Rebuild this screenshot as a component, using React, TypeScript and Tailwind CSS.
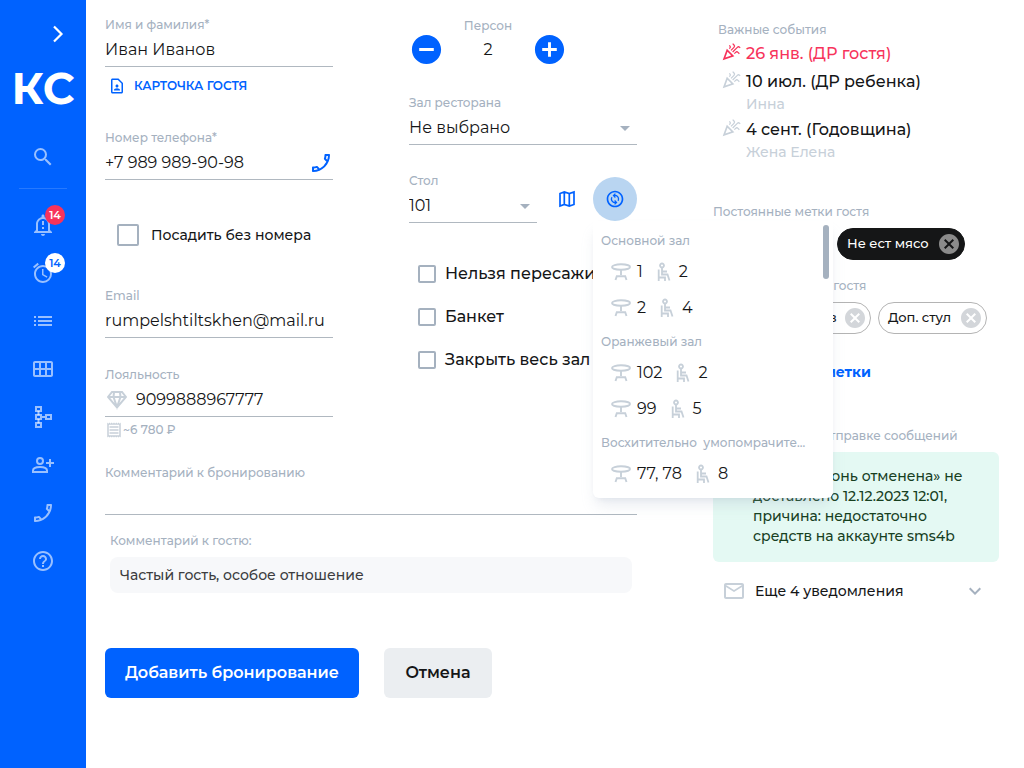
import { useState } from 'react';
import type { ReactNode } from 'react';
import clsx from 'clsx';
import {
  MdAccessAlarm,
  MdAddCircle,
  MdArrowDropDown,
  MdCancel,
  MdHelpOutline,
  MdKeyboardArrowDown,
  MdList,
  MdMailOutline,
  MdOutlineCalendarViewMonth,
  MdOutlineCall,
  MdOutlineCelebration,
  MdOutlineChangeCircle,
  MdOutlineContactPage,
  MdOutlineNotificationImportant,
  MdOutlineReceipt,
  MdRemoveCircle,
  MdSearch,
} from 'react-icons/md';

interface IconProps {
  className?: string;
}

function ExpandIcon({ className }: IconProps) {
  return (
    <svg viewBox="0 0 24 24" fill="none" stroke="currentColor" strokeWidth="2.200" className={className}>
      <path d="M8 4.500l7.500 7.500L8 19.500" />
    </svg>
  );
}

function SchemeIcon({ className }: IconProps) {
  return (
    <svg viewBox="0 0 24 24" fill="none" stroke="currentColor" strokeWidth="2" className={className}>
      <path d="M5 2h5v4H5zM5 10h5v4H5zM5 18h5v4H5zM15 10h5v4h-5zM10 12h5" />
      <path d="M7.500 6v4M7.500 14v4" />
    </svg>
  );
}

function PersonAddIcon({ className }: IconProps) {
  return (
    <svg viewBox="0 0 24 24" fill="none" stroke="currentColor" strokeWidth="2" className={className}>
      <circle cx="9" cy="8" r="3" />
      <path d="M2 19v-1.500C2 15 6 14 9 14s7 1 7 3.500V19zM15 10h8M19 6v8" />
    </svg>
  );
}

function MapIcon({ className }: IconProps) {
  return (
    <svg viewBox="0 0 18 18" fill="none" stroke="currentColor" strokeWidth="1.700" className={className}>
      <path d="M2 3.500 6.300 2l5 1.500L16 2v12.500L11.300 16l-5-1.500L2 16zM6.300 2v12.500M11.300 3.500V16" />
    </svg>
  );
}

function GemIcon({ className }: IconProps) {
  return (
    <svg viewBox="0 0 20 20" fill="none" stroke="currentColor" strokeWidth="2" className={className}>
      <path d="M5 2h10l4 5-9 10.500L1 7zM1 7h18M7 2.500 6.500 7l3.500 10L13.500 7 13 2.500" />
    </svg>
  );
}

function TableIcon({ className }: IconProps) {
  return (
    <svg viewBox="0 0 20 18" fill="none" stroke="currentColor" strokeWidth="1.900" className={className}>
      <ellipse cx="10" cy="4" rx="9" ry="2.700" />
      <path d="M10 7v5M4.500 17l1.300-3.800h8.400L15.500 17" />
    </svg>
  );
}

function SeatIcon({ className }: IconProps) {
  return (
    <svg viewBox="0 0 14 20" fill="none" stroke="currentColor" strokeWidth="1.800" className={className}>
      <circle cx="5" cy="3.500" r="2" />
      <path d="M5 6v6.500h5.500l2 6M5.500 9.500H10M1.700 7.500V19M1.700 15.500h6.300V19" />
    </svg>
  );
}

const navItems = [
  { label: 'Уведомления', icon: MdOutlineNotificationImportant, badge: '14', badgeStyle: 'bg-[#f7335b] text-white' },
  { label: 'Напоминания', icon: MdAccessAlarm, badge: '14', badgeStyle: 'bg-white text-[#0062ff]' },
  { label: 'Список', icon: MdList },
  { label: 'Календарь', icon: MdOutlineCalendarViewMonth },
  { label: 'Схема', icon: SchemeIcon },
  { label: 'Добавить гостя', icon: PersonAddIcon },
  { label: 'Звонки', icon: MdOutlineCall, flip: true },
  { label: 'Помощь', icon: MdHelpOutline },
];

const halls = [
  { name: 'Основной зал', tables: [{ table: '1', seats: 2 }, { table: '2', seats: 4 }] },
  { name: 'Оранжевый зал', tables: [{ table: '102', seats: 2 }, { table: '99', seats: 5 }] },
  { name: 'Восхитительно\u00a0 умопомрачите...', tables: [{ table: '77, 78', seats: 8 }] },
];

const events = [
  { title: '26 янв. (ДР гостя)', urgent: true },
  { title: '10 июл. (ДР ребенка)', person: 'Инна' },
  { title: '4 сент. (Годовщина)', person: 'Жена Елена' },
];

function Sidebar() {
  return (
    <aside className="flex w-[86px] shrink-0 flex-col items-center bg-[#0062ff]">
      <button aria-label="Развернуть" className="mt-[22px] mr-4 self-end text-white">
        <ExpandIcon className="size-6" />
      </button>
      <div className="mt-[18px] text-[44px] leading-12 font-bold text-white">КС</div>
      <button aria-label="Поиск" className="mt-[33px] text-white/60">
        <MdSearch className="size-6" />
      </button>
      <nav className="mt-[19px] flex w-12 flex-col items-center border-t border-white/15">
        {navItems.map(({ label, icon: Icon, badge, badgeStyle, flip }) => (
          <a
            key={label}
            href="#"
            aria-label={label}
            className="relative flex size-12 items-center justify-center text-white/60 first:mt-3"
          >
            <Icon className={clsx('size-6', flip && '-scale-x-100')} />
            {badge && (
              <span
                className={clsx(
                  'absolute top-1 right-0.5 flex size-5 items-center justify-center rounded-full text-[11px] font-semibold',
                  badgeStyle,
                )}
              >
                {badge}
              </span>
            )}
          </a>
        ))}
      </nav>
    </aside>
  );
}

interface FieldProps {
  id: string;
  label: string;
  className?: string;
  children: ReactNode;
}

function Field({ id, label, className, children }: FieldProps) {
  return (
    <div className={clsx('border-b border-[#b0b8c0]', className)}>
      <label htmlFor={id} className="block text-xs font-medium text-[#a5b1bf]">
        {label}
      </label>
      <div className="relative flex h-[33px] items-center">{children}</div>
    </div>
  );
}

function SelectBox({ id, options }: { id: string; options: string[] }) {
  return (
    <>
      <select id={id} className="w-full appearance-none bg-transparent text-base outline-none">
        {options.map((option) => (
          <option key={option}>{option}</option>
        ))}
      </select>
      <MdArrowDropDown className="pointer-events-none absolute right-0 size-6 text-[#a5b1bf]" />
    </>
  );
}

const inputStyle = 'w-full min-w-0 bg-transparent text-base outline-none';

function Check({ label, large }: { label: string; large?: boolean }) {
  return (
    <label
      className={clsx(
        'flex h-6 items-center font-medium whitespace-nowrap',
        large ? 'gap-3 text-sm' : 'gap-[9px] text-base',
      )}
    >
      <input
        type="checkbox"
        className={clsx(
          'shrink-0 appearance-none rounded-xs border-2 border-[#a5b1bf] checked:bg-[#0062ff]',
          large ? 'size-[22px]' : 'size-[18px]',
        )}
      />
      {label}
    </label>
  );
}

function TableMenu() {
  return (
    <div className="absolute top-full left-0 z-10 w-60 rounded-b-md bg-white pt-1 pb-1.5 shadow-lg shadow-slate-400/20">
      {halls.map((hall) => (
        <section key={hall.name}>
          <h3 className="h-[29px] pt-2 pl-2 text-xs font-medium whitespace-nowrap text-[#a5b1bf]">{hall.name}</h3>
          {hall.tables.map(({ table, seats }) => (
            <button type="button" key={table} className="flex h-9 w-full items-center pl-[18px] text-base">
              <TableIcon className="mr-1.5 h-[18px] w-5 text-[#c7d0d9]" />
              {table}
              <SeatIcon className="mr-2 ml-3.5 h-5 w-3.5 text-[#c7d0d9]" />
              {seats}
            </button>
          ))}
        </section>
      ))}
      <span className="absolute top-1 right-1 h-[54px] w-1.5 rounded-full bg-[#a5b1bf]" />
    </div>
  );
}

function Chip({ label, dark, className }: { label: string; dark?: boolean; className?: string }) {
  return (
    <span
      className={clsx(
        'flex h-8 items-center justify-between rounded-full border pr-[3px] pl-[9px] text-[13px] font-medium whitespace-nowrap',
        dark ? 'border-[#151617] bg-[#151617] text-white' : 'border-[#b4b4b4] text-[#151617]',
        className,
      )}
    >
      {label}
      <button aria-label={`Удалить: ${label}`} className={dark ? 'text-[#8b8b8b]' : 'text-[#d3d6da]'}>
        <MdCancel className="size-6" />
      </button>
    </span>
  );
}

function GuestPanel() {
  return (
    <section className="min-w-0 flex-[286]">
      <div className="pt-[5px] pl-[5px]">
        <h2 className="text-xs font-medium text-[#a5b1bf]">Важные события</h2>
        <ul className="mt-1 space-y-1 font-medium">
          {events.map(({ title, person, urgent }) => (
            <li
              key={title}
              className={clsx('flex items-start gap-[5px] pl-[3px]', urgent ? 'text-[#f7335b]' : 'text-[#151617]')}
            >
              <MdOutlineCelebration className={clsx('size-5', !urgent && 'text-[#c7d0d9]')} />
              <div>
                {title}
                {person && <div className="text-sm text-[#c7d0d9]">{person}</div>}
              </div>
            </li>
          ))}
        </ul>
      </div>

      <h2 className="mt-[42px] text-xs font-medium text-[#a5b1bf]">Постоянные метки гостя</h2>
      <div className="mt-2 flex gap-2">
        <Chip label="Аллергия" dark className="w-[116px]" />
        <Chip label="Не ест мясо" dark className="w-32" />
      </div>

      <h2 className="mt-[18px] text-xs font-medium text-[#a5b1bf]">Временные метки гостя</h2>
      <div className="mt-2 flex gap-[7px]">
        <Chip label="Много подарков" className="w-[158px]" />
        <Chip label="Доп. стул" className="w-[109px]" />
      </div>

      <button className="mt-[26px] block w-[158px] text-right text-sm leading-6 font-bold text-[#0062ff]">
        Изменить метки
      </button>

      <h2 className="mt-11 text-xs font-medium text-[#a5b1bf]">Уведомления об отправке сообщений</h2>
      <p className="mt-2 rounded-md bg-[#e4f9f3] pt-3.5 pr-5 pb-4 pl-10 text-sm font-medium text-[#17401f]">
        Статус «Бронь отменена» не доставлено 12.12.2023 12:01, причина: недостаточно средств на аккаунте sms4b
      </p>
      <button className="mt-[17px] flex h-6 w-full items-center pr-3 pl-[9px] text-sm font-medium">
        <MdMailOutline className="size-6 text-[#c7d0d9]" />
        <span className="ml-[9px]">Еще 4 уведомления</span>
        <MdKeyboardArrowDown className="ml-auto size-6 text-[#a5b1bf]" />
      </button>
    </section>
  );
}

export default function App() {
  const [persons, setPersons] = useState(2);

  return (
    <div className="flex min-h-screen bg-white font-[Montserrat,Inter,sans-serif] text-[#151617]">
      <Sidebar />
      <main className="flex min-w-0 flex-1 gap-[76px] pt-[17px] pr-[25px] pl-[19px]">
        <form className="min-w-0 flex-[532]" onSubmit={(e) => e.preventDefault()}>
          <div className="grid grid-cols-2 gap-x-[76px]">
            <div>
              <Field id="name" label="Имя и фамилия*">
                <input id="name" className={inputStyle} defaultValue="Иван Иванов" />
              </Field>
              <button
                type="button"
                className="mt-[7px] flex h-6 items-center gap-2 pl-[3px] text-xs font-semibold text-[#0062ff]"
              >
                <MdOutlineContactPage className="size-[18px]" />
                КАРТОЧКА ГОСТЯ
              </button>
              <Field id="phone" label="Номер телефона*" className="mt-8">
                <input id="phone" className={inputStyle} defaultValue="+7 989 989-90-98" />
                <MdOutlineCall className="size-6 shrink-0 -scale-x-100 text-[#0062ff]" />
              </Field>
              <div className="mt-[43px] pl-3">
                <Check label="Посадить без номера" large />
              </div>
              <Field id="email" label="Email" className="mt-[41px]">
                <input id="email" className={inputStyle} defaultValue="rumpelshtiltskhen@mail.ru" />
              </Field>
              <Field id="loyalty" label="Лояльность" className="mt-[29px]">
                <GemIcon className="mr-[9px] ml-0.5 size-5 shrink-0 text-[#c7d0d9]" />
                <input id="loyalty" className={inputStyle} defaultValue="9099888967777" />
              </Field>
              <div className="mt-1 flex h-[18px] items-center text-xs font-medium text-[#a5b1bf]">
                <MdOutlineReceipt className="size-[18px] text-[#c7d0d9]" />
                ~6 780 ₽
              </div>
            </div>

            <div>
              <div className="flex w-[158px] items-center justify-between text-[#0062ff]">
                <button
                  type="button"
                  aria-label="Меньше"
                  className="mt-[15px]"
                  onClick={() => setPersons(Math.max(1, persons - 1))}
                >
                  <MdRemoveCircle className="size-[35px]" />
                </button>
                <div className="text-center">
                  <div className="text-xs font-medium text-[#a5b1bf]">Персон</div>
                  <output className="flex h-[33px] items-center justify-center text-base text-[#151617]">
                    {persons}
                  </output>
                </div>
                <button
                  type="button"
                  aria-label="Больше"
                  className="mt-[15px]"
                  onClick={() => setPersons(persons + 1)}
                >
                  <MdAddCircle className="size-[35px]" />
                </button>
              </div>
              <Field id="hall" label="Зал ресторана" className="mt-7">
                <SelectBox id="hall" options={['Не выбрано', 'Основной зал', 'Оранжевый зал']} />
              </Field>
              <div className="mt-7 flex items-start">
                <Field id="table" label="Стол" className="min-w-0 flex-1">
                  <SelectBox id="table" options={['101', '102', '99']} />
                </Field>
                <button type="button" aria-label="Карта зала" className="mt-[17px] ml-[21px] text-[#0062ff]">
                  <MapIcon className="size-[18px]" />
                </button>
                <div className="relative mt-1 ml-[17px]">
                  <button
                    type="button"
                    aria-label="Сменить стол"
                    className="flex size-11 items-center justify-center rounded-full bg-[#b9d5f1] text-[#0062ff]"
                  >
                    <MdOutlineChangeCircle className="size-5" />
                  </button>
                  <TableMenu />
                </div>
              </div>
              <div className="mt-[39px] space-y-[19px] pl-[9px]">
                <Check label="Нельзя пересаживать" />
                <Check label="Банкет" />
                <Check label="Закрыть весь зал" />
              </div>
            </div>
          </div>

          <Field id="comment" label="Комментарий к бронированию" className="mt-[26px]">
            <input id="comment" className={inputStyle} />
          </Field>
          <div className="mt-[18px] px-[5px]">
            <div className="text-xs font-medium text-[#a5b1bf]">Комментарий к гостю:</div>
            <p className="mt-2 rounded-lg bg-[#f7f8fa] px-2.5 py-2 text-sm font-medium text-[#3c3d3f]">
              Частый гость, особое отношение
            </p>
          </div>
          <div className="mt-[55px] flex gap-[25px] text-base font-semibold">
            <button type="submit" className="h-[50px] w-[254px] rounded-md bg-[#0062ff] text-white">
              Добавить бронирование
            </button>
            <button type="button" className="h-[50px] w-[108px] rounded-md bg-[#ebeef1]">
              Отмена
            </button>
          </div>
        </form>
        <GuestPanel />
      </main>
    </div>
  );
}
